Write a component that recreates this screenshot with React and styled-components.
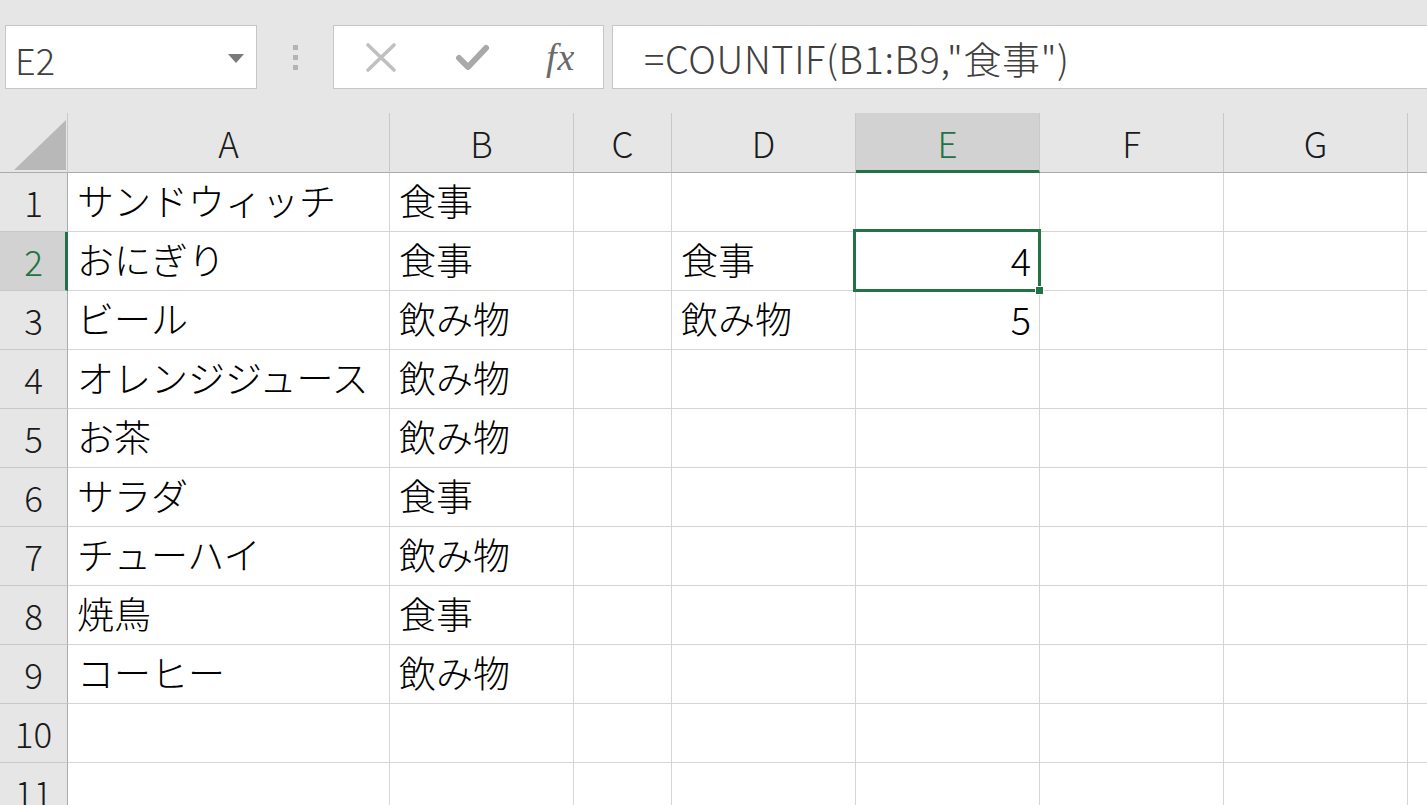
import React from "react";
import styled, { createGlobalStyle } from "styled-components";

const GREEN = "#217346";
const FONT = `"Noto Sans CJK JP", "Noto Sans", sans-serif`;

const columns = [
  { key: "A", width: 322 },
  { key: "B", width: 184 },
  { key: "C", width: 98 },
  { key: "D", width: 184 },
  { key: "E", width: 184 },
  { key: "F", width: 184 },
  { key: "G", width: 184 },
  { key: "H", width: 184 },
];

const data = {
  1: { A: "サンドウィッチ", B: "食事" },
  2: { A: "おにぎり", B: "食事", D: "食事", E: 4 },
  3: { A: "ビール", B: "飲み物", D: "飲み物", E: 5 },
  4: { A: "オレンジジュース", B: "飲み物" },
  5: { A: "お茶", B: "飲み物" },
  6: { A: "サラダ", B: "食事" },
  7: { A: "チューハイ", B: "飲み物" },
  8: { A: "焼鳥", B: "食事" },
  9: { A: "コーヒー", B: "飲み物" },
  10: {},
  11: {},
};

const GlobalStyle = createGlobalStyle`
  html, body {
    margin: 0;
    padding: 0;
    background: #ffffff;
    overflow: hidden;
  }
  * {
    box-sizing: border-box;
  }
`;

const Page = styled.div`
  width: 1427px;
  height: 805px;
  overflow: hidden;
  font-family: ${FONT};
  font-weight: 300;
  background: #e6e6e6;
`;

const Toolbar = styled.div`
  display: flex;
  align-items: stretch;
  height: 113px;
  padding: 25px 0 24px 5px;
`;

const NameBox = styled.div`
  width: 252px;
  background: #fff;
  border: 1px solid #c6c6c6;
  display: flex;
  align-items: center;
  justify-content: space-between;
  padding: 4px 12px 0 9px;
  color: #404040;
  font-size: 36px;
`;

const Dots = styled.div`
  width: 76px;
  display: flex;
  flex-direction: column;
  align-items: center;
  justify-content: center;
  gap: 5px;
  span {
    width: 5px;
    height: 5px;
    background: #b4b4b4;
  }
`;

const FxBox = styled.div`
  width: 271px;
  background: #fff;
  border: 1px solid #c6c6c6;
  display: flex;
  align-items: center;
  padding: 0 0 0 30px;
  gap: 56px;
`;

const FxLabel = styled.span`
  font-family: "Liberation Serif", "DejaVu Serif", serif;
  font-style: italic;
  font-size: 38px;
  color: #6a6a6a;
  margin-left: 0;
  letter-spacing: 1px;
`;

const FormulaBar = styled.div`
  flex: 1;
  margin-left: 8px;
  margin-right: -4px;
  background: #fff;
  border: 1px solid #c6c6c6;
  border-right: none;
  display: flex;
  align-items: center;
  padding: 0 0 0 31px;
  font-size: 38px;
  color: #404040;
  letter-spacing: 0.6px;
`;

const Sheet = styled.div`
  display: grid;
  grid-template-columns: 68px ${columns.map((c) => `${c.width}px`).join(" ")};
  grid-template-rows: 60px;
  grid-auto-rows: 59px;
  background: #fff;
`;

const Corner = styled.div`
  background: #e6e6e6;
  border-bottom: 1px solid #ababab;
  border-right: 1px solid #c8c8c8;
  display: flex;
  align-items: flex-end;
  justify-content: flex-end;
  padding: 0 1px 2px 0;
`;

const ColHeader = styled.div`
  background: ${(p) => (p.$active ? "#d2d2d2" : "#e6e6e6")};
  color: ${(p) => (p.$active ? GREEN : "#1a1a1a")};
  border-right: 1px solid #c8c8c8;
  border-bottom: ${(p) => (p.$active ? `3px solid ${GREEN}` : "1px solid #ababab")};
  display: flex;
  align-items: center;
  justify-content: center;
  font-size: 35px;
  padding-top: ${(p) => (p.$active ? "2px" : "0")};
`;

const RowHeader = styled.div`
  background: ${(p) => (p.$active ? "#d2d2d2" : "#e6e6e6")};
  color: ${(p) => (p.$active ? GREEN : "#1a1a1a")};
  border-bottom: 1px solid #c8c8c8;
  border-right: ${(p) => (p.$active ? `3px solid ${GREEN}` : "1px solid #ababab")};
  display: flex;
  align-items: center;
  justify-content: center;
  font-size: 35px;
  padding: 0 0 2px ${(p) => (p.$active ? "2px" : "0")};
`;

const Cell = styled.div`
  position: relative;
  border-right: 1px solid #d4d4d4;
  border-bottom: 1px solid #d4d4d4;
  display: flex;
  align-items: center;
  justify-content: ${(p) => (p.$number ? "flex-end" : "flex-start")};
  padding: 0 ${(p) => (p.$number ? "8px" : "0")} 4px ${(p) => (p.$number ? "0" : "9px")};
  font-size: ${(p) => (p.$number ? "38px" : "37px")};
  color: #000;
  white-space: nowrap;
  overflow: visible;
  z-index: ${(p) => (p.$selected ? 2 : 1)};
`;

const Selection = styled.div`
  position: absolute;
  left: -3px;
  top: -3px;
  right: -2px;
  bottom: -2px;
  border: 3px solid ${GREEN};
  pointer-events: none;
`;

const Handle = styled.div`
  position: absolute;
  right: -6px;
  bottom: -6px;
  width: 9px;
  height: 9px;
  background: ${GREEN};
  border: 1px solid #fff;
`;

const CancelIcon = () => (
  <svg width="34" height="34" viewBox="0 0 34 34">
    <path d="M4 5 L30 30 M30 5 L4 30" stroke="#c0c0c0" strokeWidth="3.6" strokeLinecap="round" />
  </svg>
);

const CheckIcon = () => (
  <svg width="36" height="34" viewBox="0 0 36 34">
    <path d="M5 18 L14 27 L32 8" stroke="#a9a9a9" strokeWidth="6" fill="none" strokeLinecap="round" strokeLinejoin="round" />
  </svg>
);

const Caret = () => (
  <svg width="16" height="10" viewBox="0 0 16 10">
    <path d="M0 0 L16 0 L8 9 Z" fill="#7a7a7a" />
  </svg>
);

const CornerTriangle = () => (
  <svg width="52" height="50" viewBox="0 0 52 50">
    <path d="M52 0 L52 50 L0 50 Z" fill="#b8b8b8" />
  </svg>
);

const App = () => {
  const activeRow = 2;
  const activeCol = "E";
  return (
    <Page>
      <GlobalStyle />
      <Toolbar>
        <NameBox>
          <span>E2</span>
          <Caret />
        </NameBox>
        <Dots>
          <span />
          <span />
          <span />
        </Dots>
        <FxBox>
          <CancelIcon />
          <CheckIcon />
          <FxLabel>fx</FxLabel>
        </FxBox>
        <FormulaBar>=COUNTIF(B1:B9,"食事")</FormulaBar>
      </Toolbar>
      <Sheet>
        <Corner>
          <CornerTriangle />
        </Corner>
        {columns.map((c) => (
          <ColHeader key={c.key} $active={c.key === activeCol}>
            {c.key}
          </ColHeader>
        ))}
        {Object.keys(data).map((r) => {
          const row = Number(r);
          return (
            <React.Fragment key={r}>
              <RowHeader $active={row === activeRow}>{row}</RowHeader>
              {columns.map((c) => {
                const value = data[r][c.key];
                const selected = row === activeRow && c.key === activeCol;
                return (
                  <Cell key={c.key} $number={typeof value === "number"} $selected={selected}>
                    {value}
                    {selected && (
                      <Selection>
                        <Handle />
                      </Selection>
                    )}
                  </Cell>
                );
              })}
            </React.Fragment>
          );
        })}
      </Sheet>
    </Page>
  );
};

export default App;
